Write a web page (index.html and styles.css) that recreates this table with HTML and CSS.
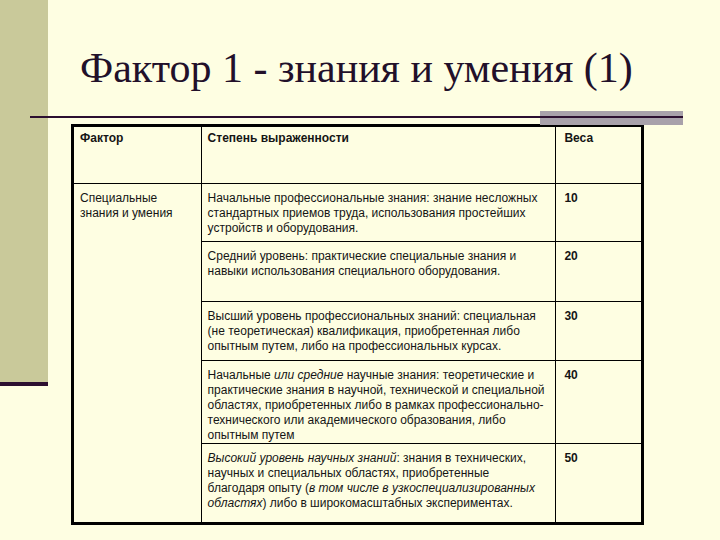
FILE: index.html
```html
<!DOCTYPE html>
<html lang="ru">
<head>
<meta charset="utf-8">
<link rel="stylesheet" href="styles.css">
</head>
<body>
<div class="slide">
  <div class="sidebar"></div>
  <div class="main">
    <h1 class="title">Фактор 1 - знания и умения (1)</h1>
    <div class="rule">
      <div class="rule-bar"></div>
      <div class="rule-line"></div>
    </div>
    <table class="grid">
      <colgroup>
        <col class="c1"><col class="c2"><col class="c3">
      </colgroup>
      <tr class="r0">
        <th>Фактор</th>
        <th>Степень выраженности</th>
        <th class="num">Веса</th>
      </tr>
      <tr class="r1">
        <td rowspan="5">Специальные<br>знания и умения</td>
        <td>Начальные профессиональные знания: знание несложных стандартных приемов труда, использования простейших устройств и оборудования.</td>
        <td class="num">10</td>
      </tr>
      <tr class="r2">
        <td>Средний уровень: практические специальные знания и навыки использования специального оборудования.</td>
        <td class="num">20</td>
      </tr>
      <tr class="r3">
        <td>Высший уровень профессиональных знаний: специальная (не теоретическая) квалификация, приобретенная либо опытным путем, либо на профессиональных курсах.</td>
        <td class="num">30</td>
      </tr>
      <tr class="r4">
        <td>Начальные <i>или средние</i> научные знания: теоретические и практические знания в научной, технической и специальной областях, приобретенных либо в рамках профессионально-технического или академического образования, либо опытным путем</td>
        <td class="num">40</td>
      </tr>
      <tr class="r5">
        <td><i>Высокий уровень научных знаний</i>: знания в технических, научных и специальных областях, приобретенные благодаря опыту (<i>в том числе в узкоспециализированных областях</i>) либо в широкомасштабных экспериментах.</td>
        <td class="num">50</td>
      </tr>
    </table>
  </div>
</div>
</body>
</html>
```

FILE: styles.css
```css
* { box-sizing: border-box; }
html, body {
  margin: 0;
  padding: 0;
  background: #FEFEE2;
}
.slide {
  display: flex;
  width: 720px;
  height: 540px;
  overflow: hidden;
}
.sidebar {
  flex: 0 0 48px;
  height: 386px;
  background: #C9C99A;
  border-bottom: 4px solid #2C0F30;
}
.main {
  flex: 1;
  display: flex;
  flex-direction: column;
}
.title {
  margin: 42px 0 0 32px;
  font-family: "Liberation Serif", "Times New Roman", serif;
  font-weight: normal;
  font-size: 42px;
  line-height: 52px;
  color: #22102A;
  white-space: nowrap;
}
.rule {
  position: relative;
  margin: 17px 0 0 -18px;
  width: 653px;
  height: 14px;
  display: flex;
  justify-content: flex-end;
}
.rule-bar {
  width: 143px;
  height: 14px;
  background: #A8A1AA;
}
.rule-line {
  position: absolute;
  left: 0;
  right: 0;
  top: 5px;
  height: 2px;
  background: #2C0F30;
}
.grid {
  margin: -1px 0 0 23px;
  width: 573px;
  border-collapse: collapse;
  border: 3px solid #000;
  font-family: "Liberation Sans", Arial, sans-serif;
  font-size: 12px;
  line-height: 15px;
  color: #151515;
}
.c1 { width: 129px; }
.c2 { width: 357px; }
.c3 { width: 87px; }
.grid th, .grid td {
  border: 1px solid #000;
  vertical-align: top;
  text-align: left;
  padding: 7px 6px 0 6px;
}
.grid th { font-weight: bold; padding-top: 4px; }
.grid .num { padding-left: 8px; font-weight: bold; }
.r0 { height: 58px; }
.r1 { height: 58px; }
.r2 { height: 60px; }
.r3 { height: 59px; }
.r4 { height: 82px; }
.r5 { height: 80px; }
```
